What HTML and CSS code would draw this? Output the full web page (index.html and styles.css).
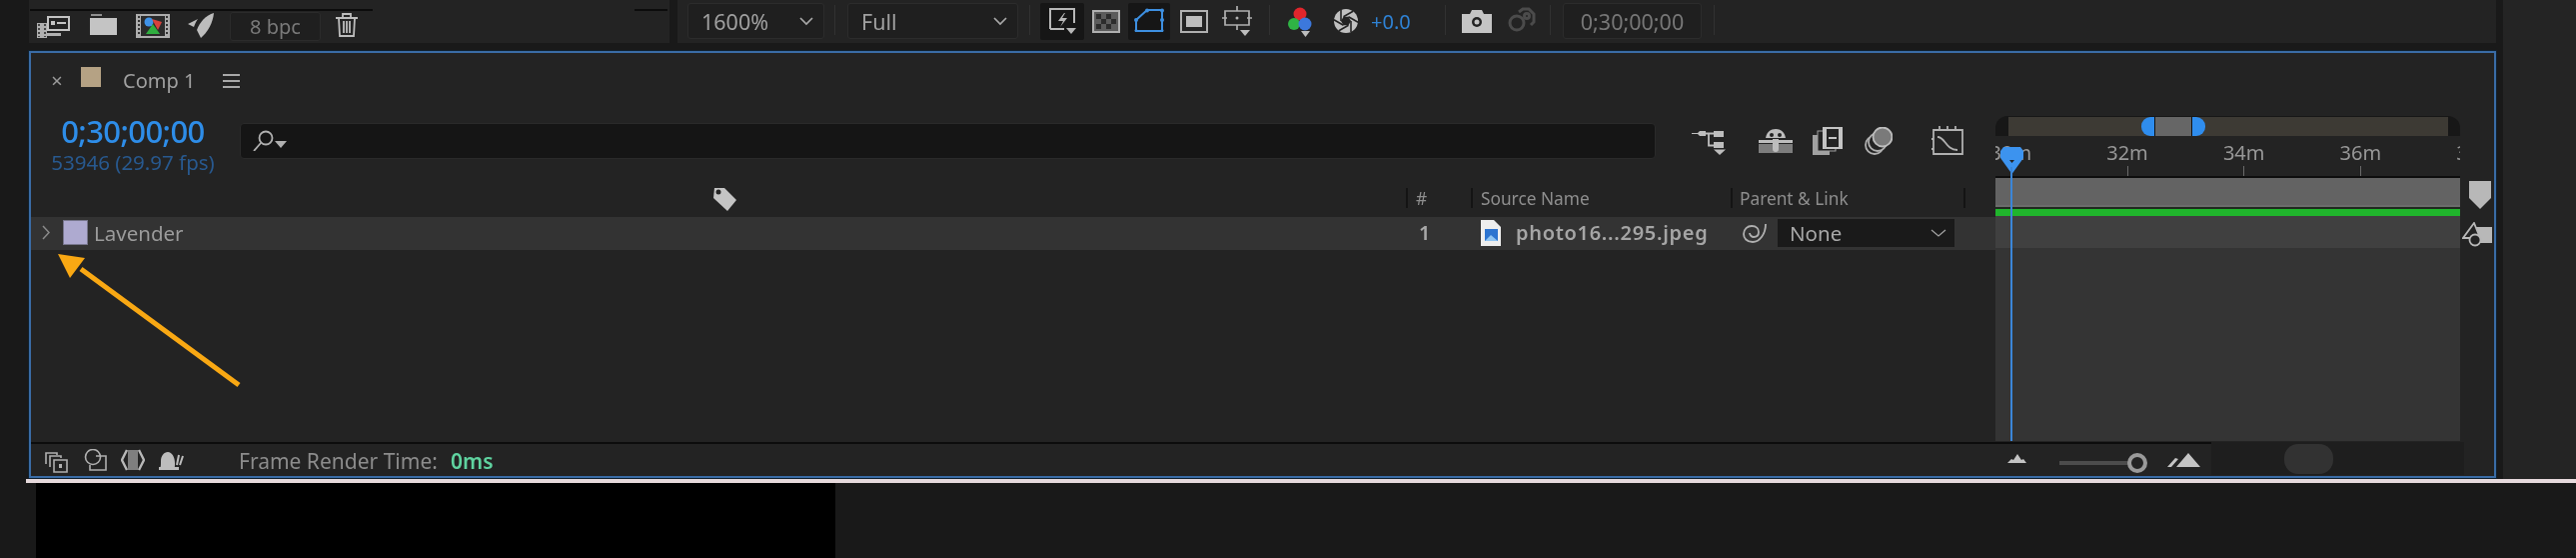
FILE: index.html
```html
<!DOCTYPE html>
<html lang="en">
<head>
<meta charset="utf-8">
<title>Comp 1 timeline</title>
<link rel="stylesheet" href="styles.css">
</head>
<body>
<div class="app">
  <div class="upper">
    <div class="main">
      <div class="toolbars">
        <div class="tb-left">
          <div class="tb-lines"><span class="line-a"></span><span class="line-b"></span></div>
          <div class="tb-icons">
            <svg class="i-interp" width="34" height="24" viewBox="0 0 34 24"><path d="M1 8h10v15H1z" fill="#b0b0b0"/><path d="M3 9v13M9 9v13" stroke="#232323" stroke-width="1.5" stroke-dasharray="2 2"/><rect x="11" y="1" width="23" height="15" fill="#c4c4c4"/><rect x="13" y="3" width="19" height="11" fill="#232323"/><rect x="15" y="6" width="4" height="4" fill="#c4c4c4"/><rect x="21" y="7" width="9" height="2" fill="#c4c4c4"/><path d="M11 18h14v3H11z" fill="#b0b0b0"/></svg>
            <svg class="i-folder" width="27" height="21" viewBox="0 0 27 21"><path d="M1 0h11v2H1z" fill="#8f8f8f"/><path d="M0 4h27v17H0z" fill="#c4c4c4"/></svg>
            <svg class="i-footage" width="34" height="24" viewBox="0 0 34 24"><rect width="34" height="24" fill="#adadad"/><rect x="5" y="2" width="24" height="20" fill="#2b2b2b"/><path d="M2 3h2M2 7h2M2 11h2M2 15h2M2 19h2M30 3h2M30 7h2M30 11h2M30 15h2M30 19h2" stroke="#333" stroke-width="2"/><circle cx="13" cy="8" r="4.5" fill="#3f93e8"/><path d="M16 5l10 3-4 8z" fill="#d8423c"/><path d="M10 20l7-10 7 10z" fill="#2fae3f"/></svg>
            <svg class="i-rocket" width="26" height="25" viewBox="0 0 26 25"><path d="M26 0C18 2 12 9 9 17l4 8c7-6 12-15 13-25z" fill="#bdbdbd"/><path d="M0 11l10-5c-2 3-3 5-4 8z" fill="#bdbdbd"/></svg>
            <div class="bpc">8 bpc</div>
            <svg class="i-trash" width="22" height="24" viewBox="0 0 22 24" fill="none" stroke="#bdbdbd" stroke-width="1.8"><path d="M0 5h22M7 5V1h8v4M3 5l1 18h14l1-18M8 8v12M11 8v12M14 8v12"/></svg>
          </div>
        </div>
        <div class="tb-right">
          <div class="sel sel-zoom"><span>1600%</span><svg width="16" height="9" viewBox="0 0 16 9" fill="none" stroke="#a8a8a8" stroke-width="1.7"><path d="M2 1l6 6 6-6"/></svg></div>
          <span class="sep sep1"></span>
          <div class="sel sel-full"><span>Full</span><svg width="16" height="9" viewBox="0 0 16 9" fill="none" stroke="#a8a8a8" stroke-width="1.7"><path d="M2 1l6 6 6-6"/></svg></div>
          <span class="sep sep2"></span>
          <div class="tbtn tbtn-fast">
            <svg width="30" height="27" viewBox="0 0 30 27" fill="none" stroke="#b8b8b8" stroke-width="2"><path d="M3 22V2h24v14"/><path d="M3 22h14"/><path d="M17 6l-6 8h5l-3 6 7-9h-5l3-5z" fill="#b8b8b8" stroke="none"/><path d="M19 21h10l-5 6z" fill="#b8b8b8" stroke="none"/></svg>
          </div>
          <svg class="i-checker" width="28" height="23" viewBox="0 0 28 23"><rect x="1" y="1" width="26" height="21" fill="#5c5c5c" stroke="#b0b0b0" stroke-width="2"/><path d="M4 4h5v5H4zM14 4h5v5h-5zM9 9h5v5H9zM19 9h5v5h-5zM4 14h5v5H4zM14 14h5v5h-5z" fill="#2c2c2c"/></svg>
          <div class="tbtn tbtn-mask">
            <svg width="30" height="24" viewBox="0 0 30 24" fill="none" stroke="#3d8fe0" stroke-width="2"><path d="M13 2H28V23H2V12Z"/><g fill="#3d8fe0" stroke="none"><circle cx="13" cy="2.500" r="2"/><circle cx="28" cy="2.500" r="2"/><circle cx="28" cy="12" r="2"/><circle cx="28" cy="22.500" r="1.500"/><circle cx="2" cy="22.500" r="1.500"/><circle cx="2" cy="12" r="2"/></g></svg>
          </div>
          <svg class="i-region" width="28" height="23" viewBox="0 0 28 23"><rect x="1" y="1" width="26" height="21" fill="#232323" stroke="#b0b0b0" stroke-width="2"/><rect x="6" y="6" width="16" height="11" fill="#bdbdbd"/></svg>
          <svg class="i-guides" width="30" height="30" viewBox="0 0 30 30" fill="none" stroke="#b0b0b0" stroke-width="1.700"><path d="M3 5h24v14H3zM15 0v5M15 19v5M0 12h5M25 12h5"/><circle cx="15" cy="12" r="1.500" fill="#b0b0b0" stroke="none"/><path d="M18 24h10l-5 6z" fill="#bdbdbd" stroke="none"/></svg>
          <span class="sep sep3"></span>
          <svg class="i-rgb" width="24" height="30" viewBox="0 0 24 30"><circle cx="12" cy="7" r="6.500" fill="#e0262c"/><circle cx="6" cy="17" r="6" fill="#2fb344"/><circle cx="17" cy="17" r="6.500" fill="#3c78dc"/><path d="M13 24h9l-4.500 6z" fill="#bdbdbd"/></svg>
          <svg class="i-aperture" width="26" height="24" viewBox="0 0 26 24"><circle cx="13" cy="12" r="12" fill="#c0c0c0"/><path d="M18 12l-2.500 4.300h-5L8 12l2.500-4.300h5z" fill="#232323"/><path d="M18 12v11M15.500 16.300L5.900 21.800M10.500 16.300L.9 10.800M8 12V1M10.500 7.700L20.100 2.200M15.500 7.700L25.100 13.200" stroke="#232323" stroke-width="1.600"/></svg>
          <div class="exposure">+0.0</div>
          <span class="sep sep4"></span>
          <svg class="i-camera" width="30" height="23" viewBox="0 0 30 23"><path d="M0 4h8l2-4h10l2 4h8v19H0z" fill="#c4c4c4"/><circle cx="15" cy="12" r="5" fill="#232323"/><circle cx="15" cy="12" r="2.500" fill="#c4c4c4"/></svg>
          <svg class="i-snap" width="30" height="25" viewBox="0 0 30 25" fill="none" stroke="#4b4b4b" stroke-width="3"><circle cx="11" cy="16" r="7"/><path d="M13 5l4-3h6l5 5v8l-3 3"/><circle cx="21" cy="9" r="2.500"/></svg>
          <span class="sep sep5"></span>
          <div class="sel sel-time"><span>0;30;00;00</span></div>
          <span class="sep sep6"></span>
        </div>
      </div>

      <section class="comp">
        <div class="tabrow">
          <span class="close">×</span>
          <span class="tab-swatch"></span>
          <span class="tab-name">Comp 1</span>
          <svg class="i-menu" width="17" height="14" viewBox="0 0 17 14"><path d="M0 1h17M0 7h17M0 13h17" stroke="#a8a8a8" stroke-width="2"/></svg>
        </div>
        <div class="body">
          <div class="layers">
            <div class="controls">
              <div class="timecode">
                <div class="tc-main">0;30;00;00</div>
                <div class="tc-sub">53946 (29.97 fps)</div>
              </div>
              <div class="search">
                <svg width="34" height="21" viewBox="0 0 34 21" fill="none" stroke="#b0b0b0" stroke-width="1.800"><circle cx="13" cy="8" r="6.500"/><path d="M8 13l-7 8"/><path d="M22 11h12l-6 7z" fill="#b0b0b0" stroke="none"/></svg>
              </div>
              <svg class="i-flow" width="34" height="25" viewBox="0 0 34 25"><path d="M0 3h6l2-2h6v5H8L6 4H0zM22 1h10v6H22zM22 12h10v6H22z" fill="#bdbdbd"/><path d="M14 3.500h8M17 3.500v12h5" stroke="#bdbdbd" stroke-width="1.800" fill="none"/><path d="M22 19.500h12l-6 5.500z" fill="#bdbdbd"/></svg>
              <svg class="i-draft" width="34" height="24" viewBox="0 0 34 24"><path d="M7 9C8 3 12 0 17 0s9 3 10 9z" fill="#bdbdbd"/><path d="M0 11h34v3H0z" fill="#bdbdbd"/><path d="M0 15h34v9H0z" fill="#7d7d7d"/><circle cx="13" cy="6" r="2" fill="#232323"/><circle cx="21" cy="6" r="2" fill="#232323"/><path d="M14 10h6v10a3 3 0 0 1-6 0z" fill="#bdbdbd"/></svg>
              <svg class="i-frames" width="30" height="28" viewBox="0 0 30 28"><rect y="8" width="17" height="20" fill="#a0a0a0"/><rect x="5" y="4" width="18" height="20" fill="#232323" stroke="#a0a0a0"/><rect x="10" width="20" height="22" fill="#c4c4c4"/><rect x="14" y="2" width="12" height="18" fill="#232323"/><path d="M16 11h8" stroke="#c4c4c4" stroke-width="2"/></svg>
              <svg class="i-blur" width="28" height="28" viewBox="0 0 28 28"><circle cx="10" cy="18" r="9" fill="none" stroke="#b0b0b0" stroke-width="1.800"/><circle cx="13" cy="15" r="9" fill="#232323" stroke="#b0b0b0" stroke-width="1.800"/><circle cx="18" cy="10" r="9.500" fill="#7a7a7a" stroke="#bdbdbd" stroke-width="1.800"/></svg>
              <svg class="i-graph" width="32" height="30" viewBox="0 0 32 30" fill="none" stroke="#b0b0b0" stroke-width="1.800"><path d="M2 5h29v24H2zM8 1v4M16 1v4M24 1v4M0 14h2M0 24h2"/><path d="M6 12c8 0 8 13 20 13"/></svg>
            </div>
            <div class="headers">
              <svg class="i-tag" width="24" height="25" viewBox="0 0 24 25"><path d="M2 2h10l12 12-9 11L1 12z" fill="#c4c4c4"/><circle cx="6" cy="6" r="2.500" fill="#232323"/></svg>
              <span class="hsep hsep1"></span>
              <span class="h-num">#</span>
              <span class="hsep hsep2"></span>
              <span class="h-source">Source Name</span>
              <span class="hsep hsep3"></span>
              <span class="h-parent">Parent &amp; Link</span>
              <span class="hsep hsep4"></span>
            </div>
            <div class="layer">
              <svg class="i-twirl" width="8" height="15" viewBox="0 0 8 15" fill="none" stroke="#8a8a8a" stroke-width="1.500"><path d="M1 1l6 6.500L1 14"/></svg>
              <span class="layer-swatch"></span>
              <span class="layer-name">Lavender</span>
              <span class="layer-num">1</span>
              <svg class="i-file" width="20" height="26" viewBox="0 0 20 26"><path d="M0 0h13l7 7v19H0z" fill="#eeeeee"/><rect x="4" y="9" width="13" height="12" fill="#2d74d0"/><path d="M4 21l6-6 7 6z" fill="#8fc4f2"/></svg>
              <span class="layer-source">photo16...295.jpeg</span>
              <svg class="i-spiral" width="24" height="20" viewBox="0 0 24 20" fill="none" stroke="#b0b0b0" stroke-width="1.800"><path d="M23 1c0 10-6 18-13 18C4 19 1 15 1 11c0-5 4-8 8-8 5 0 7 3 7 6 0 3-2 5-5 5-2 0-4-2-4-4"/></svg>
              <div class="parent-sel"><span>None</span><svg width="16" height="8" viewBox="0 0 16 8" fill="none" stroke="#a0a0a0" stroke-width="1.300"><path d="M1 1l7 6 7-6"/></svg></div>
            </div>
          </div>

          <div class="timeline">
            <div class="nav">
              <div class="nav-bar">
                <span class="nav-l"></span><span class="nav-mid"></span><span class="nav-r"></span>
              </div>
            </div>
            <div class="ruler">
              <div class="mark">30m</div>
              <div class="mark">32m</div>
              <div class="mark">34m</div>
              <div class="mark">36m</div>
              <div class="mark">38m</div>
            </div>
            <div class="workarea"></div>
            <div class="cache"></div>
            <div class="track"></div>
            <div class="track-rest"></div>
            <div class="playhead">
              <svg width="23" height="27" viewBox="0 0 23 27"><path d="M3 0h17l3 4v7L11.500 27 0 11V4z" fill="#3c93ef"/><path d="M9 13h5l-2.500 3z" fill="#222"/></svg>
              <span class="playline"></span>
            </div>
          </div>

          <div class="strip">
            <svg class="i-marker" width="22" height="28" viewBox="0 0 22 28"><path d="M0 0h22v17L11 28 0 17z" fill="#b8b8b8"/></svg>
            <svg class="i-shapes" width="30" height="25" viewBox="0 0 30 25"><rect x="14" y="5" width="16" height="16" fill="#b8b8b8"/><path d="M12 1L1 16h17z" fill="#232323" stroke="#b8b8b8" stroke-width="1.800"/><circle cx="13" cy="18" r="5.500" fill="#232323" stroke="#b8b8b8" stroke-width="1.800"/></svg>
          </div>
        </div>

        <div class="foot">
          <div class="foot-main">
            <svg class="f1" width="23" height="21" viewBox="0 0 23 21" fill="none" stroke="#b0b0b0" stroke-width="1.600"><path d="M1 12V1h11v2"/><path d="M5 15V4h11v2"/><path d="M9 8h13v12H9z"/><rect x="14" y="12" width="3" height="4" fill="#b0b0b0" stroke="none"/></svg>
            <svg class="f2" width="23" height="22" viewBox="0 0 23 22" fill="none" stroke="#b0b0b0" stroke-width="1.600"><circle cx="9" cy="8" r="7.500"/><path d="M12 7h10v14H6v-5"/></svg>
            <svg class="f3" width="24" height="22" viewBox="0 0 24 22"><path d="M7 1h10v20H7z" fill="#7f7f7f"/><path d="M6 1L1 11l5 10M18 1l5 10-5 10" fill="none" stroke="#b8b8b8" stroke-width="2.400"/></svg>
            <svg class="f4" width="26" height="19" viewBox="0 0 26 19"><path d="M1 18c2-1 2-3 2-8s3-9 7-9 7 5 7 11c0 3 0 4-1 6z" fill="#bdbdbd"/><path d="M1 16h20v3H1z" fill="#bdbdbd"/><path d="M19 14l2-10M22 14l3-9" stroke="#bdbdbd" stroke-width="2"/></svg>
            <span class="render-label">Frame Render Time:</span>
            <span class="render-value">0ms</span>
            <svg class="m-small" width="19" height="9" viewBox="0 0 19 9"><path d="M0 9l4-4 2 1 4-6 4 6 2-1 3 4z" fill="#c4c4c4"/></svg>
            <div class="slider"><span class="slider-track"></span><span class="slider-knob"></span></div>
            <svg class="m-big" width="33" height="14" viewBox="0 0 33 14"><path d="M0 14l8-9 3 1-7 8zM9 14L21 0l12 14z" fill="#c4c4c4"/></svg>
          </div>
          <div class="foot-scroll"><span class="thumb"></span></div>
        </div>

        <svg class="arrow" width="190" height="140" viewBox="0 0 190 140"><path d="M183 133L25 17" stroke="#f9a813" stroke-width="5" fill="none"/><path d="M2 2l27 4-15 20z" fill="#f9a813"/></svg>
      </section>
    </div>
    <div class="dock"></div>
  </div>
  <div class="rule"></div>
  <div class="lower"><div class="black"></div></div>
</div>
</body>
</html>
```
FILE: styles.css
```css
* { box-sizing: border-box; }
html, body { margin: 0; padding: 0; background: #191919; }
body { width: 2578px; height: 558px; overflow: hidden; font-family: "Noto Sans", "Open Sans", sans-serif; color: #9a9a9a; }
svg { display: block; flex: none; }

.app { width: 2578px; height: 558px; display: flex; flex-direction: column; filter: blur(0.5px); }
.upper { display: flex; height: 479px; }
.main { width: 2505px; padding: 0 7px 0 29px; background: #191919; }
.dock { flex: 1; background: #242424; }
.rule { height: 4px; margin-left: 26px; background: #e6d9dc; }
.lower { flex: 1; padding-left: 36px; }
.black { width: 800px; height: 75px; background: #000; }

/* top toolbars */
.toolbars { display: flex; height: 43px; gap: 8px; }
.tb-left { width: 641px; background: #232323; }
.tb-right { flex: 1; background: #232323; display: flex; align-items: flex-start; padding-left: 10px; }
.tb-lines { height: 11px; display: flex; justify-content: space-between; }
.line-a { width: 343px; height: 11px; border-bottom: 2px solid #0c0c0c; margin-left: 1px; }
.line-b { width: 33px; height: 11px; border-bottom: 2px solid #0c0c0c; margin-right: 2px; }
.tb-icons { display: flex; align-items: flex-start; padding-left: 7px; }
.i-interp { margin-top: 4px; }
.i-folder { margin: 3px 0 0 20px; }
.i-footage { margin: 3px 0 0 19px; }
.i-rocket { margin: 2px 0 0 18px; }
.bpc { width: 91px; height: 29px; margin: 1px 0 0 16px; border: 1px solid #2b2b2b; border-radius: 3px; background: #1f1f1f; color: #7a7a7a; font-size: 20px; line-height: 27px; text-align: center; }
.i-trash { margin: 2px 0 0 15px; }

.sel { height: 36px; margin-top: 3px; border: 1px solid #2c2c2c; border-radius: 3px; background: #1f1f1f; display: flex; align-items: center; justify-content: space-between; font-size: 21.5px; color: #a0a0a0; padding: 0 9px 0 13px; }
.sel-zoom { width: 137px; }
.sel-full { width: 171px; margin-left: 12px; }
.sel-time { width: 139px; margin-left: 12px; justify-content: center; padding: 0; color: #777; }
.sep { width: 1px; height: 30px; margin-top: 5px; background: #313131; }
.sep1 { margin-left: 10px; }
.sep2 { margin-left: 11px; }
.sep3 { margin-left: 17px; }
.sep4 { margin-left: 32px; }
.sep5 { margin-left: 14px; }
.sep6 { margin-left: 12px; }
.tbtn { height: 37px; margin-top: 3px; background: #161616; border-radius: 2px; display: flex; justify-content: center; }
.tbtn-fast { width: 44px; margin-left: 10px; padding-top: 4px; }
.tbtn-mask { width: 42px; margin-left: 8px; padding-top: 5px; }
.i-checker { margin: 10px 0 0 8px; }
.i-region { margin: 10px 0 0 10px; }
.i-guides { margin: 6px 0 0 14px; }
.i-rgb { margin: 7px 0 0 18px; }
.i-aperture { margin: 9px 0 0 21px; }
.exposure { margin: 9px 0 0 12px; width: 42px; font-size: 20px; line-height: 26px; color: #2f82d4; white-space: nowrap; }
.i-camera { margin: 10px 0 0 16px; }
.i-snap { margin: 7px 0 0 14px; }

/* composition panel */
.comp { margin-top: 8px; height: 427px; border: 2px solid #3a6ca6; box-shadow: 0 0 0 1px #10202e; background: #232323; display: flex; flex-direction: column; position: relative; }
.tabrow { height: 60px; display: flex; align-items: flex-start; }
.close { margin: 15px 0 0 20px; width: 12px; font-size: 20px; line-height: 26px; text-align: center; color: #9a9a9a; }
.tab-swatch { width: 20px; height: 20px; margin: 14px 0 0 18px; background: #b5a284; }
.tab-name { margin: 14px 0 0 22px; font-size: 20px; line-height: 28px; color: #a0a0a0; white-space: nowrap; width: 77px; }
.i-menu { margin: 21px 0 0 23px; }

.body { display: flex; height: 329px; }
.layers { width: 1966px; }
.controls { height: 72px; display: flex; align-items: flex-start; }
.timecode { width: 204px; text-align: center; white-space: nowrap; }
.tc-main { font-size: 31px; line-height: 36px; font-weight: 500; letter-spacing: -0.6px; color: #2e8de8; }
.tc-sub { font-size: 20.5px; line-height: 26px; color: #28598f; }
.search { width: 1417px; height: 36px; margin: 10px 0 0 5px; background: #151515; border: 1px solid #2a2a2a; border-radius: 4px; padding: 6px 0 0 12px; }
.i-flow { margin: 17px 0 0 36px; }
.i-draft { margin: 16px 0 0 33px; }
.i-frames { margin: 14px 0 0 20px; }
.i-blur { margin: 14px 0 0 22px; }
.i-graph { margin: 12px 0 0 39px; }

.headers { height: 32px; padding-bottom: 6px; display: flex; align-items: center; font-size: 17.3px; color: #8e8e8e; white-space: nowrap; }
.i-tag { margin-left: 682px; }
.hsep { width: 2px; height: 20px; background: #141414; }
.hsep1 { margin-left: 670px; }
.h-num { margin-left: 8px; width: 55px; }
.h-source { margin-left: 8px; width: 250px; }
.h-parent { margin-left: 7px; width: 224px; }

.layer { height: 33px; padding-bottom: 2px; background: #333; display: flex; align-items: center; white-space: nowrap; }
.i-twirl { margin-left: 11px; }
.layer-swatch { width: 25px; height: 25px; margin-left: 13px; background: #aeaad0; border: 1px solid #77768c; }
.layer-name { margin-left: 6px; width: 101px; font-size: 20.5px; color: #9b9b9b; }
.layer-num { margin-left: 1225px; width: 62px; font-size: 20px; font-weight: 600; color: #a8a8a8; }
.layer-source { margin-left: 15px; width: 227px; font-size: 20px; font-weight: 600; letter-spacing: 0.7px; color: #a5a5a5; }
.parent-sel { width: 177px; height: 28px; margin-left: 11px; background: #1a1a1a; display: flex; align-items: center; justify-content: space-between; padding: 0 8px 0 12px; font-size: 20.5px; color: #a8a8a8; }

/* timeline */
.timeline { width: 465px; position: relative; display: flex; flex-direction: column; padding-top: 3px; }
.nav { height: 20px; background: #171717; border-radius: 12px 12px 0 0; padding: 1px 12px 0 13px; }
.nav-bar { height: 19px; background: #3d3a34; display: flex; padding-left: 133px; }
.nav-l { width: 13px; background: #2f8dee; border-radius: 9px 0 0 9px; }
.nav-mid { width: 38px; background: #666; border-left: 1px solid #111; border-right: 1px solid #111; }
.nav-r { width: 13px; background: #2f8dee; border-radius: 0 9px 9px 0; }
.ruler { height: 42px; flex: none; overflow: hidden; display: flex; border-bottom: 2px solid #0d0d0d; }
.mark { width: 116.7px; flex: none; text-align: center; font-size: 20px; line-height: 26px; padding-top: 4px; color: #979797; transform: translateX(-43px); }
.mark::after { content: ""; display: block; width: 1px; height: 10px; margin: 0 auto; background: #6a6a6a; }
.workarea { height: 29px; flex: none; background: #636363; border-bottom: 2px solid #6c6c6c; }
.cache { height: 9px; flex: none; background: #20b52c; border-top: 2px solid #1f2a1f; }
.track { height: 32px; flex: none; background: #404040; }
.track-rest { flex: 1; background: #343434; margin-bottom: 1px; }
.playhead { position: absolute; left: 5px; top: 34px; width: 23px; height: 295px; }
.playline { position: absolute; left: 10px; top: 20px; width: 2px; height: 274px; background: #3b86d8; }

.strip { flex: 1; display: flex; flex-direction: column; align-items: flex-end; padding-right: 3px; }
.i-marker { margin-top: 68px; }
.i-shapes { margin-top: 13px; margin-right: -1px; }

/* footer */
.foot { height: 34px; display: flex; }
.foot-main { width: 2182px; border-top: 2px solid #0c0c0c; display: flex; align-items: flex-start; white-space: nowrap; }
.f1 { margin: 8px 0 0 14px; }
.f2 { margin: 5px 0 0 16px; }
.f3 { margin: 5px 0 0 14px; }
.f4 { margin: 7px 0 0 13px; }
.render-label { margin: 3px 0 0 55px; width: 212px; font-size: 21px; line-height: 28px; color: #8c8c8c; }
.render-value { margin-top: 3px; width: 42px; font-size: 21px; line-height: 28px; font-weight: 600; color: #5fd3a0; }
.m-small { margin: 10px 0 0 1516px; }
.slider { width: 88px; height: 20px; margin: 9px 0 0 33px; display: flex; align-items: center; }
.slider-track { width: 70px; height: 4px; background: #4c4c4c; }
.slider-knob { width: 20px; height: 20px; margin-left: -2px; flex: none; border: 4px solid #9a9a9a; border-radius: 50%; background: #232323; }
.m-big { margin: 9px 0 0 20px; }
.foot-scroll { width: 253px; height: 33px; background: #1e1e1e; padding: 2px 0 0 73px; }
.thumb { display: block; width: 49px; height: 30px; background: #323232; border-radius: 14px; }

/* annotation drawn over the panel */
.arrow { position: absolute; left: 25px; top: 199px; }
```
